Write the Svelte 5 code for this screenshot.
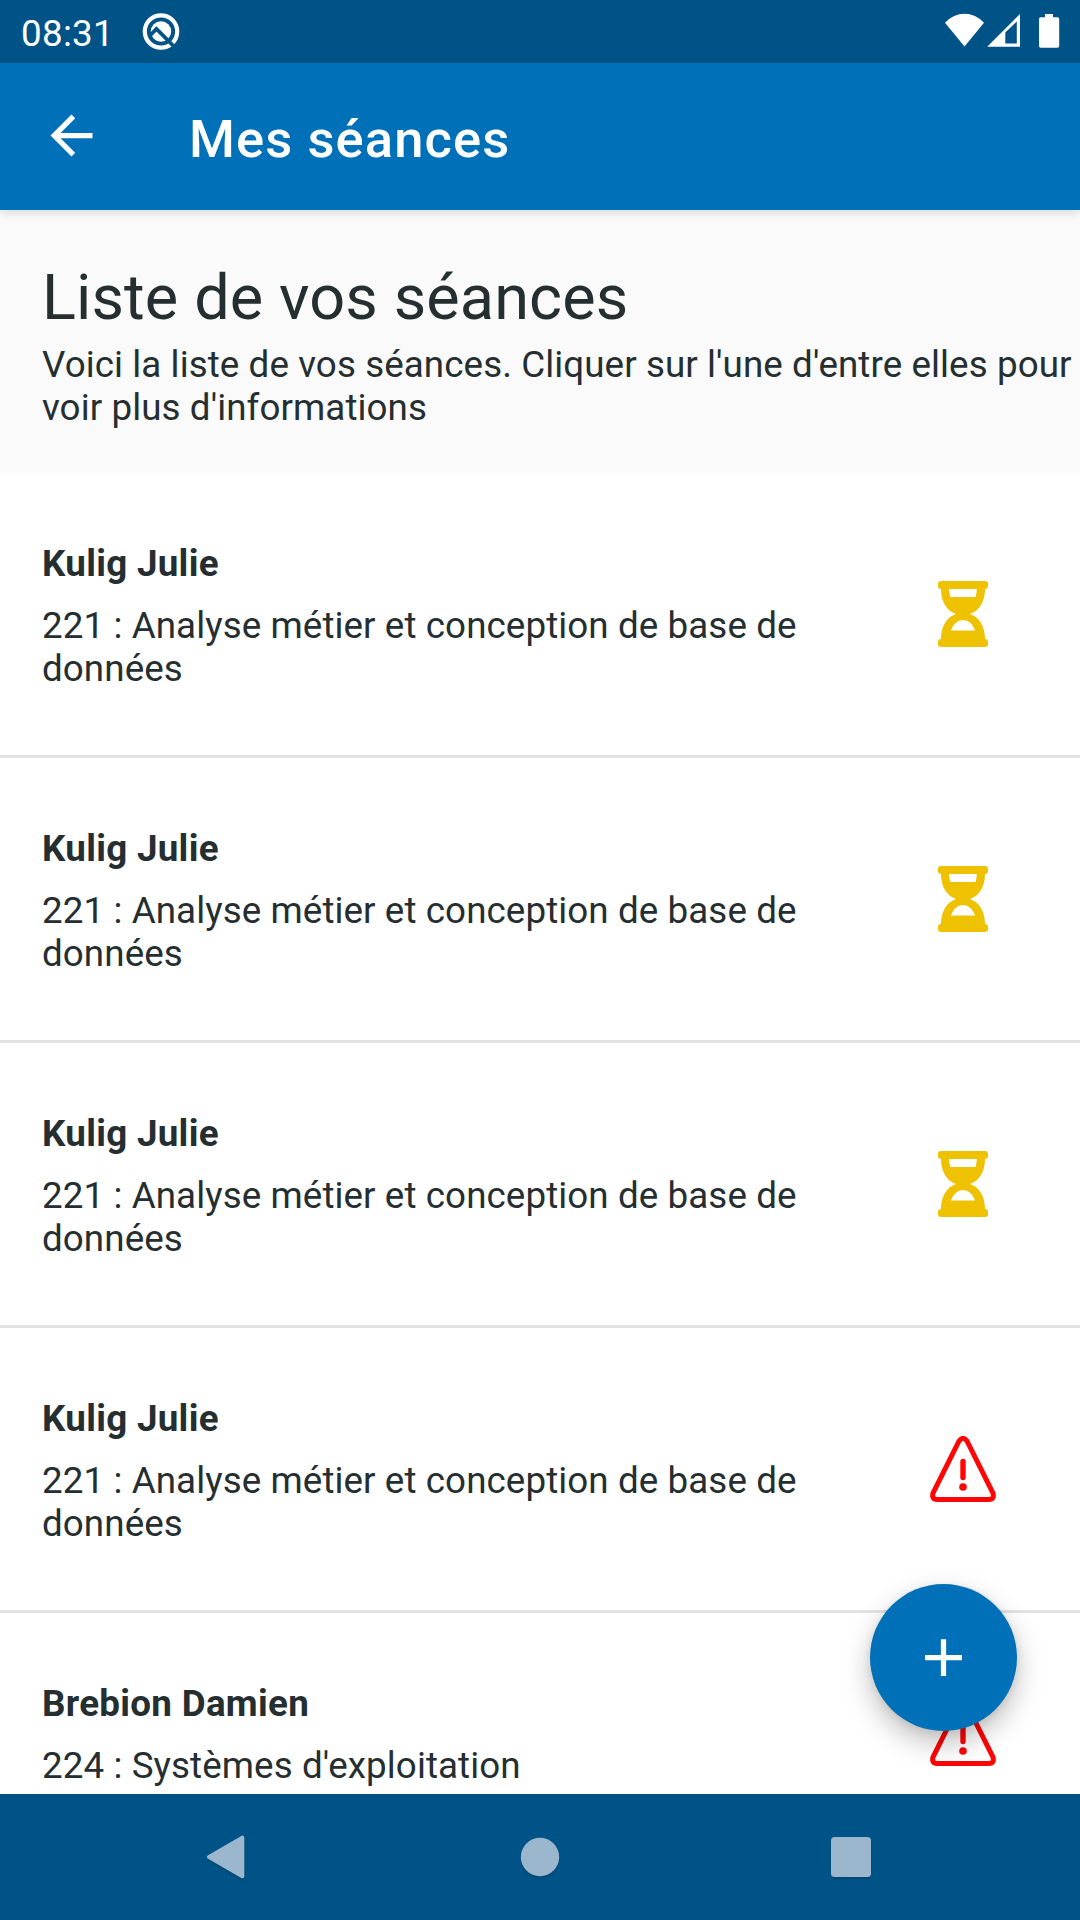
<script>
  const course = '221 : Analyse métier et conception de base de données';
  const sessions = [
    { name: 'Kulig Julie', course, status: 'pending' },
    { name: 'Kulig Julie', course, status: 'pending' },
    { name: 'Kulig Julie', course, status: 'pending' },
    { name: 'Kulig Julie', course, status: 'warning' },
    { name: 'Brebion Damien', course: "224 : Systèmes d'exploitation", status: 'warning' }
  ];
</script>

<div class="screen">
  <div class="status">
    <span class="time">08:31</span>
    <svg class="q" width="38" height="38" viewBox="0 0 38 38">
      <circle cx="19" cy="19.5" r="16.2" fill="none" stroke="#fff" stroke-width="4.2" />
      <circle cx="19" cy="19.5" r="10.2" fill="#fff" />
      <path d="M8 23.5 L14.5 17 L32 34.5" fill="none" stroke="#005387" stroke-width="3.8" />
    </svg>
    <svg class="tray" width="116" height="36" viewBox="0 0 116 36">
      <path d="M0 9.8 Q8.5 .8 19.5 .8 T39 9.8 L19.5 33.6 Z" fill="#fff" />
      <path fill-rule="evenodd" d="M42.2 33.8 L75 1 V33.8 Z M60.3 19.5 V30.6 H71.8 V8.5 Z" fill="#fff" />
      <path d="M100 1 h8 v3.3 h4.5 q1.7 0 1.7 1.7 v27 q0 1.8 -1.7 1.8 h-16.8 q-1.7 0 -1.7 -1.8 v-27 q0 -1.7 1.7 -1.7 h4.3 z" fill="#fff" />
    </svg>
  </div>

  <header class="appbar">
    <svg width="63" height="63" viewBox="0 0 24 24">
      <path d="M20 11H7.83l5.59-5.59L12 4l-8 8 8 8 1.41-1.41L7.83 13H20v-2z" fill="#fff" />
    </svg>
    <h1>Mes séances</h1>
  </header>

  <main>
    <section class="intro">
      <h2>Liste de vos séances</h2>
      <p>Voici la liste de vos séances. Cliquer sur l'une d'entre elles pour<br />voir plus d'informations</p>
    </section>
    <ul>
      {#each sessions as s}
        <li>
          <div class="info">
            <strong>{s.name}</strong>
            <span>{s.course}</span>
          </div>
          {#if s.status === 'pending'}
            <svg width="66" height="66" viewBox="0 0 66 66">
              <path
                fill-rule="evenodd"
                fill="#eec200"
                d="M11 0 H55 Q58 0 58 3 V5 Q58 8 55 8 C55 21 49 30 40 33 C49 36 55 45 55 58 Q58 58 58 61 V63 Q58 66 55 66 H11 Q8 66 8 63 V61 Q8 58 11 58 C11 45 17 36 26 33 C17 30 11 21 11 8 Q8 8 8 5 V3 Q8 0 11 0 Z M19 8 Q19 12 20.5 16 H45.5 Q46.8 12 46.8 8 Z M21 49.5 C23.5 42.5 28 39 33 39 S42.5 42.5 45 49.5 Z"
              />
            </svg>
          {:else}
            <svg width="66" height="66" viewBox="0 0 66 66">
              <path d="M28.9 5.2 Q33 -.5 37.1 5.2 L63 57.2 Q64.6 63.4 59 63.5 H7 Q1.4 63.4 3 57.2 Z" fill="none" stroke="#ff0505" stroke-width="5" />
              <path d="M33 25.5 V41.5" stroke="#ff0505" stroke-width="5.4" stroke-linecap="round" />
              <circle cx="33" cy="51" r="3.8" fill="#ff0505" />
            </svg>
          {/if}
        </li>
      {/each}
    </ul>
  </main>

  <nav>
    <svg width="42" height="48" viewBox="0 0 42 48">
      <path d="M4 24 L37.3 4.7 V43.3 Z" fill="#9ab7ce" stroke="#9ab7ce" stroke-width="4" stroke-linejoin="round" />
    </svg>
    <svg width="42" height="48" viewBox="0 0 42 48"><circle cx="22" cy="24" r="19.2" fill="#9ab7ce" /></svg>
    <svg width="42" height="48" viewBox="0 0 42 48"><rect x="1" y="4" width="40" height="40" rx="3.5" fill="#9ab7ce" /></svg>
  </nav>

  <button class="fab" aria-label="Ajouter">
    <svg width="63" height="63" viewBox="0 0 24 24"><path d="M19 13h-6v6h-2v-6H5v-2h6V5h2v6h6v2z" fill="#fff" /></svg>
  </button>
</div>

<style>
  :global(body) {
    margin: 0;
  }
  .screen {
    position: relative;
    display: flex;
    flex-direction: column;
    width: 1080px;
    height: 1920px;
    overflow: hidden;
    background: #fff;
    color: #252e30;
    font-family: Roboto, sans-serif;
    font-size: 36.75px;
    line-height: 43px;
    letter-spacing: 0.09px;
  }
  svg {
    display: block;
    flex: none;
  }
  .status {
    display: flex;
    align-items: flex-start;
    box-sizing: border-box;
    height: 63px;
    flex: none;
    padding: 12px 19px 0 21px;
    background: #005387;
    color: #fff;
  }
  .time {
    width: 121px;
    letter-spacing: 0.3px;
  }
  .tray {
    margin: 1px 0 0 auto;
  }
  .appbar {
    z-index: 1;
    display: flex;
    align-items: center;
    gap: 86px;
    box-sizing: border-box;
    height: 147px;
    flex: none;
    padding: 0 0 1px 40px;
    background: #0071b9;
    color: #fff;
    box-shadow: 0 3px 9px rgba(0, 0, 0, 0.13);
  }
  .appbar svg {
    margin-bottom: 1px;
  }
  h1 {
    margin: 6px 0 0;
    font-size: 52.5px;
    font-weight: 500;
    line-height: 62px;
    letter-spacing: 1.1px;
  }
  main {
    flex: 1;
    min-height: 0;
    overflow: hidden;
  }
  .intro {
    box-sizing: border-box;
    height: 263px;
    padding: 51px 0 0 42px;
    background: #fafafa;
  }
  h2 {
    margin: 0 0 8px;
    font-size: 63px;
    font-weight: 400;
    line-height: 74px;
    letter-spacing: 0.12px;
  }
  p {
    margin: 0;
    white-space: nowrap;
  }
  ul {
    margin: 0;
    padding: 0;
    list-style: none;
  }
  li {
    display: flex;
    align-items: center;
    justify-content: space-between;
    padding: 69px 84px 65px 42px;
    border-bottom: 3px solid #e3e3e3;
  }
  li svg {
    margin-bottom: 4px;
  }
  .info {
    display: flex;
    flex-direction: column;
    gap: 19px;
    width: 800px;
  }
  strong {
    font-weight: 700;
    letter-spacing: 0.3px;
  }
  nav {
    display: flex;
    align-items: center;
    justify-content: space-between;
    height: 126px;
    flex: none;
    padding: 0 208px 0 205px;
    background: #005387;
  }
  nav svg {
    filter: drop-shadow(0 2px 1px rgba(0, 0, 0, 0.15));
  }
  .fab {
    position: absolute;
    right: 63px;
    bottom: 189px;
    display: grid;
    place-items: center;
    width: 147px;
    height: 147px;
    padding: 0;
    border: 0;
    border-radius: 50%;
    background: #0071b9;
    box-shadow: 0 12px 28px rgba(0, 0, 0, 0.25), 0 2px 8px rgba(0, 0, 0, 0.08);
  }
</style>
